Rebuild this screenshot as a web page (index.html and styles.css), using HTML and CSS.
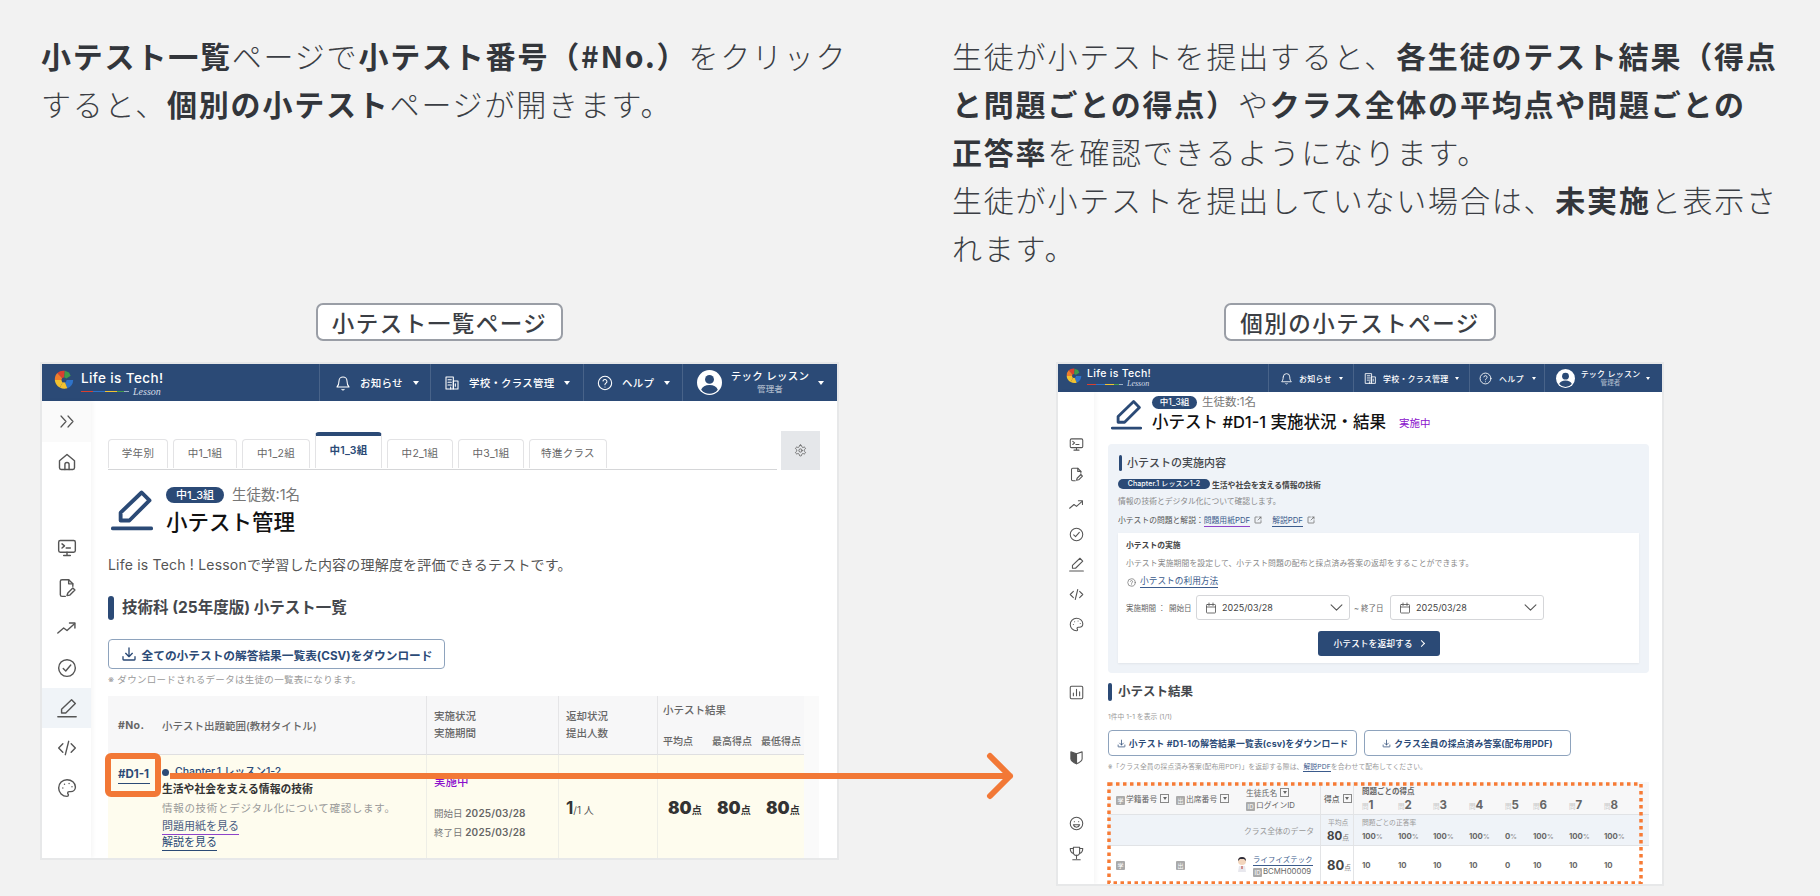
FILE: index.html
```html
<!DOCTYPE html>
<html lang="ja">
<head>
<meta charset="utf-8">
<title>小テスト</title>
<link rel="stylesheet" href="styles.css">
</head>
<body>
<svg class="defs" aria-hidden="true">
  <symbol id="i-bell" viewBox="0 0 24 24"><path d="M6 9a6 6 0 0 1 12 0c0 6 2 8 3 9H3c1-1 3-3 3-9"/><path d="M10.3 21.5a2 2 0 0 0 3.4 0"/></symbol>
  <symbol id="i-building" viewBox="0 0 24 24"><rect x="3" y="3" width="11" height="18"/><rect x="14" y="9" width="7" height="12"/><path d="M6 7h5M6 11h5M6 15h5M17 13v4M10 21v-3"/></symbol>
  <symbol id="i-help" viewBox="0 0 24 24"><circle cx="12" cy="12" r="10"/><path d="M9 9a3 3 0 0 1 5.9 1c0 2-3 2.5-3 4.5"/><path d="M12 18h.01"/></symbol>
  <symbol id="i-pen" viewBox="0 0 24 24"><path d="M1 22.5h22"/><path d="M17.500 2l4.500 4.500L10.500 18H5.500v-4.500z"/></symbol>
  <symbol id="i-home" viewBox="0 0 24 24"><path d="M3 10.500 12 3l9 7.500V19a2 2 0 0 1-2 2H5a2 2 0 0 1-2-2z"/><path d="M9.500 21v-6a2.500 2.500 0 0 1 5 0v6"/></symbol>
  <symbol id="i-monitor" viewBox="0 0 24 24"><rect x="2" y="3" width="20" height="14" rx="2"/><path d="M6 7l3 2.500L6 12M11 12h5M12 17v4M8 21h8"/></symbol>
  <symbol id="i-file" viewBox="0 0 24 24"><path d="M10 22H6a2 2 0 0 1-2-2V4a2 2 0 0 1 2-2h8l5 5v3"/><path d="M14 2v5h5"/><path d="M12 21l1-3 6-6 2.500 2.500-6 6z"/></symbol>
  <symbol id="i-trend" viewBox="0 0 24 24"><path d="M1 18l7-6 4 3 9-8"/><path d="M15 6h6.500v6"/></symbol>
  <symbol id="i-check" viewBox="0 0 24 24"><circle cx="12" cy="12" r="10"/><path d="M7.500 12.500l3 3 6-7"/></symbol>
  <symbol id="i-code" viewBox="0 0 24 24"><path d="M7 7l-5 5 5 5M17 7l5 5-5 5M14 4l-4 16"/></symbol>
  <symbol id="i-palette" viewBox="0 0 24 24"><path d="M12 2C6.500 2 2 6.500 2 12s4.500 10 10 10c.9 0 1.700-.8 1.700-1.700 0-.4-.2-.8-.5-1.100-.3-.3-.4-.7-.4-1.100 0-.9.8-1.700 1.700-1.700h2c3.100 0 5.600-2.500 5.600-5.600C22 6 17.500 2 12 2z"/><path class="dots" d="M7 12h.01M9 7.500h.01M14.500 6.500h.01M18 10.500h.01"/></symbol>
  <symbol id="i-gear" viewBox="0 0 24 24"><path d="M12.220 2h-.44a2 2 0 0 0-2 2v.18a2 2 0 0 1-1 1.730l-.43.25a2 2 0 0 1-2 0l-.15-.08a2 2 0 0 0-2.730.73l-.22.38a2 2 0 0 0 .73 2.730l.15.1a2 2 0 0 1 1 1.720v.51a2 2 0 0 1-1 1.740l-.15.09a2 2 0 0 0-.73 2.730l.22.38a2 2 0 0 0 2.730.73l.15-.08a2 2 0 0 1 2 0l.43.25a2 2 0 0 1 1 1.730V20a2 2 0 0 0 2 2h.44a2 2 0 0 0 2-2v-.18a2 2 0 0 1 1-1.730l.43-.25a2 2 0 0 1 2 0l.15.08a2 2 0 0 0 2.730-.73l.22-.39a2 2 0 0 0-.73-2.730l-.15-.08a2 2 0 0 1-1-1.740v-.5a2 2 0 0 1 1-1.740l.15-.09a2 2 0 0 0 .73-2.730l-.22-.38a2 2 0 0 0-2.730-.73l-.15.08a2 2 0 0 1-2 0l-.43-.25a2 2 0 0 1-1-1.730V4a2 2 0 0 0-2-2z"/><circle cx="12" cy="12" r="3"/></symbol>
  <symbol id="i-download" viewBox="0 0 24 24"><path d="M12 3v13M7 11l5 5 5-5M3 16v4a1 1 0 0 0 1 1h16a1 1 0 0 0 1-1v-4"/></symbol>
  <symbol id="i-calendar" viewBox="0 0 24 24"><rect x="3" y="5" width="18" height="17" rx="1.500"/><path d="M3 10h18M8 2v5M16 2v5"/></symbol>
  <symbol id="i-chev" viewBox="0 0 24 24"><path d="M2 7l10 10L22 7"/></symbol>
  <symbol id="i-ext" viewBox="0 0 24 24"><path d="M10 3H4a1 1 0 0 0-1 1v16a1 1 0 0 0 1 1h16a1 1 0 0 0 1-1v-6"/><path d="M15 3h6v6M21 3l-9 9"/></symbol>
  <symbol id="i-bars" viewBox="0 0 24 24"><rect x="2" y="2" width="20" height="20" rx="2"/><path d="M7 17v-4M12 17V7M17 17v-6"/></symbol>
  <symbol id="i-smile" viewBox="0 0 24 24"><circle cx="12" cy="12" r="10"/><path d="M7 14c1 3 3 4 5 4s4-1 5-4z"/><path d="M8.500 9h.01M15.500 9h.01"/></symbol>
  <symbol id="i-trophy" viewBox="0 0 24 24"><path d="M7 2h10v8a5 5 0 0 1-10 0z"/><path d="M7 4H2c0 5 2 7 5 8M17 4h5c0 5-2 7-5 8M12 15v5M6 22h12"/></symbol>
</svg>

<main class="page">
  <p class="lead">
    <b>小テスト一覧</b>ページで<b>小テスト番号（#No.）</b>をクリック<br>すると、<b>個別の小テスト</b>ページが開きます。
  </p>
  <p class="lead lead-wide">
    生徒が小テストを提出すると、<b>各生徒のテスト結果（得点<br>と問題ごとの得点）</b>や<b>クラス全体の平均点や問題ごとの<br>正答率</b>を確認できるようになります。<br>生徒が小テストを提出していない場合は、<b>未実施</b>と表示さ<br>れます。
  </p>

  <section class="figure">
    <h2 class="tag">小テスト一覧ページ</h2>
    <div class="win win-a">
      <header class="topbar">
        <div class="brand">
          <svg class="logo" viewBox="0 0 24 24"><path fill="#d9402f" d="M12 12 4 3.500A11 11 0 0 1 13 1z"/><path fill="#ef7d2b" d="M12 12 1 12a11 11 0 0 1 3-8.500z"/><path fill="#3f9b4b" d="M12 12l1-11 5 2 2 4z"/><path fill="#2f73c9" d="M12 12h11a11 11 0 0 1-7 10z"/><path fill="#f2c230" d="M12 12l4 10a11 11 0 0 1-9-1z"/><path fill="#f2c230" d="M12 12 7 21a11 11 0 0 1-6-9z"/><circle cx="12" cy="12" r="3" fill="#2b4a76"/></svg>
          <div class="brand-text">
            <span class="brand-name">Life is Tech!</span>
            <span class="brand-sub"><i class="rainbow"></i><em>Lesson</em></span>
          </div>
        </div>
        <div class="nav nav-1"><svg class="ic"><use href="#i-bell"/></svg><span>お知らせ</span><i class="caret"></i></div>
        <div class="nav nav-2"><svg class="ic"><use href="#i-building"/></svg><span>学校・クラス管理</span><i class="caret"></i></div>
        <div class="nav nav-3"><svg class="ic"><use href="#i-help"/></svg><span>ヘルプ</span><i class="caret"></i></div>
        <div class="nav nav-4">
          <svg class="avatar" viewBox="0 0 24 24"><circle cx="12" cy="12" r="12" fill="#fff"/><circle cx="12" cy="9" r="4.300" fill="#2b4a76"/><path fill="#2b4a76" d="M4 19c1-3 4-4.500 8-4.500s7 1.500 8 4.500a10.500 10.500 0 0 1-16 0z"/></svg>
          <div class="who"><span>テック レッスン</span><small>管理者</small></div><i class="caret"></i>
        </div>
      </header>
      <div class="shell">
        <nav class="side">
          <div class="side-toggle"><svg class="ic"><path d="M2 3l5 5.500L2 14M9 3l5 5.500L9 14"/></svg></div>
          <a class="side-item"><svg class="ic"><use href="#i-home"/></svg></a>
          <div class="side-gap"></div>
          <a class="side-item"><svg class="ic"><use href="#i-monitor"/></svg></a>
          <a class="side-item"><svg class="ic"><use href="#i-file"/></svg></a>
          <a class="side-item"><svg class="ic"><use href="#i-trend"/></svg></a>
          <a class="side-item"><svg class="ic"><use href="#i-check"/></svg></a>
          <a class="side-item is-on"><svg class="ic"><use href="#i-pen"/></svg></a>
          <a class="side-item"><svg class="ic"><use href="#i-code"/></svg></a>
          <a class="side-item"><svg class="ic"><use href="#i-palette"/></svg></a>
        </nav>
        <div class="content-a">
          <div class="tabrow">
            <ul class="tabs">
              <li>学年別</li><li>中1_1組</li><li>中1_2組</li><li class="is-on">中1_3組</li><li>中2_1組</li><li>中3_1組</li><li>特進クラス</li>
            </ul>
            <div class="gear"><svg class="ic"><use href="#i-gear"/></svg></div>
          </div>
          <div class="head-a">
            <svg class="pen-big"><use href="#i-pen"/></svg>
            <div>
              <div class="meta"><span class="pill">中1_3組</span><span class="count">生徒数:1名</span></div>
              <h1 class="title-a">小テスト管理</h1>
            </div>
          </div>
          <p class="desc-a">Life is Tech ! Lessonで学習した内容の理解度を評価できるテストです。</p>
          <h3 class="sec sec-a">技術科 (25年度版) 小テスト一覧</h3>
          <a class="btn btn-a"><svg class="ic"><use href="#i-download"/></svg>全ての小テストの解答結果一覧表(CSV)をダウンロード</a>
          <p class="note-a">※ ダウンロードされるデータは生徒の一覧表になります。</p>

          <div class="qt">
            <div class="qh qh-main"><span class="qh-no">#No.</span><span>小テスト出題範囲(教材タイトル)</span></div>
            <div class="qh qh-two"><span>実施状況</span><span>実施期間</span></div>
            <div class="qh qh-two"><span>返却状況</span><span>提出人数</span></div>
            <div class="qh qh-res"><span>小テスト結果</span><div class="qh-sub"><span>平均点</span><span>最高得点</span><span>最低得点</span></div></div>
            <div class="qscroll"></div>
            <div class="qc qc-main">
              <a class="qno">#D1-1</a>
              <div class="qinfo">
                <p class="q-ch"><i class="dot"></i>Chapter.1 レッスン1-2</p>
                <p class="q-title">生活や社会を支える情報の技術</p>
                <p class="q-desc">情報の技術とデジタル化について確認します。</p>
                <a class="q-link q-visited">問題用紙を見る</a>
                <a class="q-link">解説を見る</a>
              </div>
            </div>
            <div class="qc qc-status">
              <p class="live">実施中</p>
              <p class="date">開始日 <b>2025/03/28</b></p>
              <p class="date">終了日 <b>2025/03/28</b></p>
            </div>
            <div class="qc qc-num"><b>1</b><span>/1 人</span></div>
            <div class="qc qc-scores"><p><b>80</b>点</p><p><b>80</b>点</p><p><b>80</b>点</p></div>
            <div class="qscroll"></div>
            <i class="callout"></i>
          </div>
        </div>
      </div>
    </div>
  </section>

  <section class="figure figure-b">
    <h2 class="tag">個別の小テストページ</h2>
    <div class="win win-b">
      <header class="topbar">
        <div class="brand">
          <svg class="logo" viewBox="0 0 24 24"><path fill="#d9402f" d="M12 12 4 3.500A11 11 0 0 1 13 1z"/><path fill="#ef7d2b" d="M12 12 1 12a11 11 0 0 1 3-8.500z"/><path fill="#3f9b4b" d="M12 12l1-11 5 2 2 4z"/><path fill="#2f73c9" d="M12 12h11a11 11 0 0 1-7 10z"/><path fill="#f2c230" d="M12 12l4 10a11 11 0 0 1-9-1z"/><path fill="#f2c230" d="M12 12 7 21a11 11 0 0 1-6-9z"/><circle cx="12" cy="12" r="3" fill="#2b4a76"/></svg>
          <div class="brand-text">
            <span class="brand-name">Life is Tech!</span>
            <span class="brand-sub"><i class="rainbow"></i><em>Lesson</em></span>
          </div>
        </div>
        <div class="nav nav-1"><svg class="ic"><use href="#i-bell"/></svg><span>お知らせ</span><i class="caret"></i></div>
        <div class="nav nav-2"><svg class="ic"><use href="#i-building"/></svg><span>学校・クラス管理</span><i class="caret"></i></div>
        <div class="nav nav-3"><svg class="ic"><use href="#i-help"/></svg><span>ヘルプ</span><i class="caret"></i></div>
        <div class="nav nav-4">
          <svg class="avatar" viewBox="0 0 24 24"><circle cx="12" cy="12" r="12" fill="#fff"/><circle cx="12" cy="9" r="4.300" fill="#2b4a76"/><path fill="#2b4a76" d="M4 19c1-3 4-4.500 8-4.500s7 1.500 8 4.500a10.500 10.500 0 0 1-16 0z"/></svg>
          <div class="who"><span>テック レッスン</span><small>管理者</small></div><i class="caret"></i>
        </div>
      </header>
      <div class="shell">
        <nav class="side">
          <a class="side-item"><svg class="ic"><use href="#i-monitor"/></svg></a>
          <a class="side-item"><svg class="ic"><use href="#i-file"/></svg></a>
          <a class="side-item"><svg class="ic"><use href="#i-trend"/></svg></a>
          <a class="side-item"><svg class="ic"><use href="#i-check"/></svg></a>
          <a class="side-item"><svg class="ic"><use href="#i-pen"/></svg></a>
          <a class="side-item"><svg class="ic"><use href="#i-code"/></svg></a>
          <a class="side-item"><svg class="ic"><use href="#i-palette"/></svg></a>
          <a class="side-item side-bars"><svg class="ic"><use href="#i-bars"/></svg></a>
          <a class="side-item side-shield"><svg class="ic" viewBox="0 0 24 24"><path class="solid" d="M12 6 3 3v11c0 3 4 6 9 8z"/><path d="M12 6l9-3v11c0 3-4 6-9 8z"/></svg></a>
          <a class="side-item side-smile"><svg class="ic"><use href="#i-smile"/></svg></a>
          <a class="side-item"><svg class="ic"><use href="#i-trophy"/></svg></a>
        </nav>
        <div class="content-b">
          <div class="head-b">
            <svg class="pen-big"><use href="#i-pen"/></svg>
            <div>
              <div class="meta"><span class="pill">中1_3組</span><span class="count">生徒数:1名</span></div>
              <div class="title-row"><h1 class="title-b">小テスト #D1-1 実施状況・結果</h1><span class="live-b">実施中</span></div>
            </div>
          </div>

          <section class="panel">
            <h3 class="sec sec-b">小テストの実施内容</h3>
            <p class="chapter"><span class="pill pill-ch">Chapter.1 レッスン1-2</span><b>生活や社会を支える情報の技術</b></p>
            <p class="small gray row-desc">情報の技術とデジタル化について確認します。</p>
            <p class="small row-links">小テストの問題と解説：<a class="lnk lnk-v">問題用紙PDF</a><svg class="ic-ext"><use href="#i-ext"/></svg><a class="lnk">解説PDF</a><svg class="ic-ext"><use href="#i-ext"/></svg></p>
            <div class="card">
              <h4 class="card-title">小テストの実施</h4>
              <p class="small gray card-text">小テスト実施期間を設定して、小テスト問題の配布と採点済み答案の返却をすることができます。</p>
              <p class="card-help"><svg class="ic-help"><use href="#i-help"/></svg><a class="lnk">小テストの利用方法</a></p>
              <div class="dates">
                <span class="small lab lab-1">実施期間 ：</span><span class="small lab lab-2">開始日</span>
                <div class="select"><svg class="ic-cal"><use href="#i-calendar"/></svg><span>2025/03/28</span><svg class="ic-chev"><use href="#i-chev"/></svg></div>
                <span class="small lab lab-3">~ 終了日</span>
                <div class="select"><svg class="ic-cal"><use href="#i-calendar"/></svg><span>2025/03/28</span><svg class="ic-chev"><use href="#i-chev"/></svg></div>
              </div>
              <a class="btn-return">小テストを返却する<i class="gt"></i></a>
            </div>
          </section>

          <h3 class="sec sec-c">小テスト結果</h3>
          <p class="tiny count-line">1件中 1-1 を表示 (1/1)</p>
          <div class="btns">
            <a class="btn btn-b1"><svg class="ic"><use href="#i-download"/></svg>小テスト #D1-1の解答結果一覧表(csv)をダウンロード</a>
            <a class="btn btn-b2"><svg class="ic"><use href="#i-download"/></svg>クラス全員の採点済み答案(配布用PDF)</a>
          </div>
          <p class="tiny note-b">※「クラス全員の採点済み答案(配布用PDF)」を返却する際は、<a class="lnk">解説PDF</a>を合わせて配布してください。</p>

          <div class="rt">
            <div class="rt-row rt-head">
              <div class="rt-id">
                <span class="idc idc-1"><i class="tile">学</i>学籍番号<i class="filter"></i></span>
                <span class="idc idc-2"><i class="tile">出</i>出席番号<i class="filter"></i></span>
                <span class="idc-3"><span>生徒氏名<i class="filter"></i></span><span><i class="tile">ID</i>ログインID</span></span>
              </div>
              <div class="rt-score rt-score-h">得点<i class="filter"></i></div>
              <div class="rt-q rt-q-head">
                <span class="rt-span rt-span-h">問題ごとの得点</span>
                <span class="qn">問<b>1</b></span><span class="qn">問<b>2</b></span><span class="qn">問<b>3</b></span><span class="qn">問<b>4</b></span><span class="qn">問<b>5</b></span><span class="qn">問<b>6</b></span><span class="qn">問<b>7</b></span><span class="qn">問<b>8</b></span>
              </div>
            </div>
            <div class="rt-row rt-avg">
              <div class="rt-id rt-id-avg">クラス全体のデータ</div>
              <div class="rt-score rt-score-a"><small>平均点</small><p><b>80</b>点</p></div>
              <div class="rt-q">
                <span class="rt-span">問題ごとの正答率</span>
                <span class="pc">100<i>%</i></span><span class="pc">100<i>%</i></span><span class="pc">100<i>%</i></span><span class="pc">100<i>%</i></span><span class="pc">0<i>%</i></span><span class="pc">100<i>%</i></span><span class="pc">100<i>%</i></span><span class="pc">100<i>%</i></span>
              </div>
            </div>
            <div class="rt-row rt-data">
              <div class="rt-id">
                <i class="tile tile-l">学</i>
                <i class="tile tile-m">出</i>
                <svg class="kid" viewBox="0 0 10 18"><circle cx="5" cy="5" r="4" fill="#f3d6bd"/><path fill="#2c2c3a" d="M1 5a4 4 0 0 1 8 0L7 3H3z"/><path fill="#e8e8ee" d="M2 10h6l1 6H1z"/><path fill="#c0392b" d="M4.500 10h1v3h-1z"/></svg>
                <span class="stu"><a class="lnk">ライフイズテック</a><span><i class="tile">ID</i>BCMH00009</span></span>
              </div>
              <div class="rt-score rt-score-d"><p><b>80</b>点</p></div>
              <div class="rt-q rt-q-data"><b>10</b><b>10</b><b>10</b><b>10</b><b>0</b><b>10</b><b>10</b><b>10</b></div>
            </div>
            <svg class="dash" viewBox="0 0 536 103"><rect x="2" y="2" width="532" height="99"/></svg>
          </div>
        </div>
      </div>
    </div>
  </section>

  <svg class="arrow" viewBox="0 0 850 50"><path d="M0 24h840M820 4l20 20-20 20"/></svg>
</main>
</body>
</html>
```

FILE: styles.css
```css
* { box-sizing: border-box; }
html, body { margin: 0; padding: 0; }
body {
  width: 1820px; height: 896px; overflow: hidden;
  background: #f2f2f2;
  color: #3b3e44;
  font-family: Inter, "Noto Sans CJK JP", sans-serif;
}
p, h1, h2, h3, h4, ul { margin: 0; padding: 0; font-weight: inherit; font-size: inherit; }
a { color: inherit; text-decoration: none; }
i, em { font-style: normal; }
svg { display: block; flex: none; }
.defs { position: absolute; width: 0; height: 0; }
.ic, .pen-big, .ic-ext, .ic-help, .ic-cal, .ic-chev { fill: none; stroke: currentColor; stroke-width: 2; stroke-linecap: round; stroke-linejoin: round; }
.ic .solid { fill: currentColor; }

.page {
  position: relative;
  display: grid;
  grid-template-columns: 797px 830px;
  grid-template-rows: 272px auto;
  column-gap: 114px;
  padding: 31px 0 0 41px;
}
.lead {
  font-family: "Noto Sans CJK JP", sans-serif;
  font-size: 30px; line-height: 48px; letter-spacing: 1.8px;
  font-weight: 300; color: #3b3e44;
  white-space: nowrap;
}
.lead b { font-weight: 700; color: #33363b; }

.figure { display: flex; flex-direction: column; align-items: center; gap: 23px; }
.figure-b { width: 816px; }
.tag {
  height: 38px; padding: 0 14px; background: #fff;
  border: 2px solid #9a9ea6; border-radius: 7px;
  font-family: "Noto Sans CJK JP", sans-serif;
  font-size: 22.500px; letter-spacing: 1.500px; line-height: 34px; font-weight: 500; color: #3b3e44;
  white-space: nowrap;
}
.win { background: #fff; box-shadow: 0 0 0 2px #e7e8e9; overflow: hidden; flex: none; }
.win-a { width: 795px; height: 494px; }
.win-b { width: 604px; height: 520px; }

/* top bar */
.topbar { display: flex; height: 37px; background: #2b4a76; color: #fff; font-size: 10.500px; font-weight: 500; }
.win-b .topbar { height: 28px; font-size: 8px; }
.brand { display: flex; align-items: flex-start; width: 277px; padding: 6px 0 0 12px; gap: 7px; }
.win-b .brand { width: 210px; padding: 4px 0 0 8px; gap: 5px; }
.logo { width: 20px; height: 20px; }
.win-b .logo { width: 16px; height: 16px; }
.brand-text { display: flex; flex-direction: column; }
.brand-name { font-size: 13.500px; line-height: 16px; font-weight: 500; letter-spacing: .4px; white-space: nowrap; }
.win-b .brand-name { font-size: 10.500px; line-height: 12px; letter-spacing: .3px; }
.brand-sub { display: flex; align-items: center; gap: 4px; height: 11px; }
.win-b .brand-sub { height: 8px; }
.rainbow { display: block; width: 48px; height: 1px; background: linear-gradient(90deg,#d9402f 0 25%,#2f73c9 25% 50%,#f2c230 50% 75%,#3f9b4b 75% 90%,#9fb0c6 90%); }
.win-b .rainbow { width: 36px; }
.brand-sub em { font-family: "Liberation Serif", serif; font-style: italic; font-size: 10px; color: #d5dde8; line-height: 10px; }
.win-b .brand-sub em { font-size: 8px; }

.nav { display: flex; align-items: center; border-left: 1px solid rgba(255,255,255,.14); white-space: nowrap; letter-spacing: .2px; }
.nav .ic { width: 16px; height: 16px; stroke-width: 1.600; }
.win-b .nav .ic { width: 13px; height: 13px; }
.caret { display: block; width: 0; height: 0; border: 3px solid transparent; border-top: 4px solid #fff; border-bottom: 0; margin-left: 0; }
.nav-1 .caret, .nav-2 .caret, .nav-3 .caret { margin-left: 1px; }
.win-b .caret { border-width: 2.500px; border-top-width: 3px; border-bottom-width: 0; }
.nav-1 { width: 111px; padding-left: 15px; gap: 9px; }
.nav-2 { width: 153px; padding-left: 13px; gap: 9px; }
.nav-3 { width: 99px; padding-left: 13px; gap: 9px; }
.nav-4 { flex: 1; padding-left: 14px; gap: 9px; }
.win-b .nav-1 { width: 85px; padding-left: 11px; gap: 6px; }
.win-b .nav-2 { width: 116px; padding-left: 10px; gap: 6px; }
.win-b .nav-3 { width: 75px; padding-left: 9px; gap: 7px; }
.win-b .nav-4 { padding-left: 11px; gap: 6px; }
.avatar { width: 25px; height: 25px; }
.win-b .avatar { width: 19px; height: 19px; }
.who { display: flex; flex-direction: column; align-items: center; width: 78px; line-height: 13px; }
.who span { font-size: 10.500px; letter-spacing: .3px; }
.who small { font-size: 8.500px; color: #a9b6c8; }
.win-b .who { width: 59px; line-height: 10px; }
.win-b .who span { font-size: 8px; letter-spacing: .2px; }
.win-b .who small { font-size: 6.500px; line-height: 8px; }

/* side bar */
.shell { display: flex; height: calc(100% - 37px); }
.win-b .shell { height: 492px; }
.side { display: flex; flex-direction: column; width: 49px; color: #555; box-shadow: 2px 0 4px rgba(0,0,0,.04); flex: none; }
.win-b .side { width: 36px; padding-top: 37px; }
.side-toggle { height: 41px; display: flex; align-items: center; justify-content: center; background: #fafafa; }
.side-toggle .ic { width: 16px; height: 17px; stroke-width: 1.200; }
.side-item { display: flex; align-items: center; justify-content: center; height: 40px; }
.side-item .ic { width: 20px; height: 20px; stroke-width: 1.700; }
.side-gap { height: 46px; }
.side-item.is-on { background: #f0f4f8; }
.win-b .side-item { height: 30px; }
.win-b .side-item .ic { width: 15px; height: 15px; }
.side-bars { margin-top: 38px; }
.side-shield { margin-top: 35px; }
.side-smile { margin-top: 36px; }

/* list page */
.content-a { flex: 1; padding: 30px 0 0 17px; min-width: 0; }
.tabrow { display: flex; align-items: flex-end; height: 39px; }
.tabs {
  display: grid; grid-template-columns: 60px 64px 68px 67px 66px 66px 78px; column-gap: 5px;
  align-items: end; list-style: none; width: 669px; height: 39px; padding-bottom: 1px;
  border-bottom: 1px solid #d5d6d8; font-size: 10.500px; color: #666;
}
.tabs li { height: 29px; line-height: 28px; text-align: center; border: 1px solid #e3e3e5; border-bottom: 0; border-radius: 4px 4px 0 0; letter-spacing: .3px; }
.tabs li.is-on { height: 36px; line-height: 26px; padding-top: 2px; border-top: 4px solid #2b4a76; color: #2b4a76; font-weight: 600; }
.gear { width: 39px; height: 39px; margin-left: 4px; background: #e5e7ea; color: #666; display: flex; align-items: center; justify-content: center; }
.gear .ic { width: 13px; height: 13px; stroke-width: 1.700; }
.head-a { display: flex; align-items: flex-start; margin-top: 17px; padding-left: 3px; gap: 13px; }
.pen-big { width: 42px; height: 42px; color: #2b4a76; stroke-width: 2.200; margin-top: 2px; }
.meta { display: flex; align-items: center; gap: 8px; }
.pill { display: inline-block; background: #2b4a76; color: #fff; border-radius: 9px; height: 16px; line-height: 16px; width: 58px; text-align: center; font-size: 11px; font-weight: 500; }
.count { font-size: 14.500px; color: #777; line-height: 16px; }
.title-a { font-size: 21.500px; line-height: 28px; font-weight: 500; color: #111; margin-top: 5px; }
.desc-a { margin-top: 19px; font-size: 14px; line-height: 20px; color: #555; letter-spacing: .2px; white-space: nowrap; }
.sec { position: relative; font-weight: 700; color: #44474c; white-space: nowrap; }
.sec::before { content: ""; position: absolute; left: 0; border-radius: 3px; background: #2b4a76; }
.sec-a { margin-top: 21px; padding-left: 14px; height: 24px; font-size: 15.500px; line-height: 24px; }
.sec-a::before { top: 0; width: 6px; height: 24px; }
.btn { display: flex; align-items: center; justify-content: center; background: #fff; border: 1px solid #8ea3bd; border-radius: 4px; color: #2b4a76; font-weight: 700; white-space: nowrap; }
.btn-a { margin-top: 19px; width: 337px; height: 30px; font-size: 11.700px; gap: 5px; }
.btn-a .ic { width: 16px; height: 16px; stroke-width: 2; }
.note-a { margin-top: 5px; height: 12px; line-height: 12px; font-size: 9.500px; color: #9a9a9a; letter-spacing: .3px; }

.qt {
  position: relative; display: grid; margin-top: 10px; width: 711px;
  grid-template-columns: 319px 132px 99px 146px 15px;
  grid-template-rows: 59px 120px;
  border-radius: 3px 3px 0 0;
}
.qh { background: #f7f7f8; border-right: 1px solid #e5e5e7; border-bottom: 1px solid #dfdfe1; font-size: 10.500px; color: #666; font-weight: 500; }
.qh-main { display: flex; align-items: center; padding-left: 10px; }
.qh-no { width: 44px; font-weight: 700; letter-spacing: .4px; }
.qh-two { display: flex; flex-direction: column; justify-content: center; gap: 1px; padding-left: 7px; line-height: 16px; }
.qh-res { padding: 8px 0 0 5px; border-right: 0; line-height: 14px; }
.qh-sub { display: flex; margin-top: 16px; font-size: 10px; }
.qh-sub span { width: 49px; flex: none; }
.qscroll { background: #fafafa; }
.qc { background: #fefcee; border-right: 1px solid #eeeee6; }
.qc-main { display: flex; padding-left: 10px; }
.qno { flex: none; width: 32px; height: 18px; margin: 11px 12px 0 0; line-height: 16px; font-size: 11.500px; font-weight: 700; color: #2b4a76; border-bottom: 1px solid #2b4a76; }
.qinfo { padding-top: 10px; white-space: nowrap; }
.q-ch { display: flex; align-items: center; font-size: 10.500px; line-height: 14px; color: #2b4a76; font-weight: 500; }
.dot { display: block; width: 7px; height: 7px; border-radius: 50%; background: #2b4a76; margin: 0 6px 0 0; }
.q-title { margin-top: 2px; font-size: 10.800px; line-height: 18px; font-weight: 700; color: #333; }
.q-desc { margin-top: 1px; font-size: 10.500px; line-height: 18px; color: #999; letter-spacing: .7px; }
.q-link { display: table; font-size: 11px; line-height: 15px; color: #2b4a76; border-bottom: 1px solid #2b4a76; margin-top: 0; }
.q-visited { border-bottom-color: #8e44c9; color: #4a5d82; margin-top: 1px; }
.qc-status { padding: 18px 0 0 7px; }
.live { font-size: 11.500px; color: #8a10cc; line-height: 18px; font-weight: 500; }
.date { font-size: 9.500px; line-height: 19px; color: #777; }
.date:nth-child(2) { margin-top: 13px; }
.date b { font-weight: 600; color: #666; letter-spacing: .2px; font-size: 10px; }
.qc-num { display: flex; align-items: baseline; padding: 41px 0 0 7px; font-size: 10px; color: #555; }
.qc-num b { font-size: 17px; line-height: 24px; color: #333; }
.qc-scores { display: flex; border-right: 0; padding: 41px 0 0 10px; }
.qc-scores p { flex: none; width: 49px; font-size: 10px; line-height: 24px; font-weight: 700; color: #333; }
.qc-scores b { font-size: 17px; }
.callout { position: absolute; left: -3px; top: 57px; width: 56px; height: 44px; border: 6px solid #f27836; border-radius: 6px; }

/* detail page */
.content-b { flex: 1; padding: 4px 0 0 14px; min-width: 0; width: 568px; }
.head-b { display: flex; align-items: flex-start; height: 48px; padding-left: 3px; gap: 10px; }
.head-b .pen-big { width: 31px; height: 31px; margin-top: 3px; }
.head-b .meta { gap: 5px; height: 13px; }
.head-b .pill { width: 45px; height: 13px; line-height: 13px; font-size: 8.500px; }
.head-b .count { font-size: 11.500px; line-height: 13px; }
.title-row { display: flex; align-items: center; gap: 13px; margin-top: 2px; }
.title-b { font-size: 16.500px; line-height: 22px; font-weight: 500; color: #111; white-space: nowrap; }
.live-b { font-size: 10.500px; color: #8a10cc; }
.panel { width: 541px; height: 229px; background: #eff3f8; border-radius: 4px; padding: 11px 10px 0; }
.sec-b { height: 16px; line-height: 16px; padding-left: 8px; margin-left: 1px; font-size: 11px; font-weight: 500; }
.sec-b::before { top: 0; width: 2.500px; height: 16px; }
.chapter { display: flex; align-items: center; margin-top: 8px; height: 10px; font-size: 7.800px; gap: 2px; color: #444; white-space: nowrap; }
.pill-ch { width: 92px; height: 10px; line-height: 10px; font-size: 7px; letter-spacing: .1px; }
.chapter b { font-weight: 700; }
.small { font-size: 7.800px; color: #555; white-space: nowrap; }
.gray { color: #888; }
.row-desc { margin-top: 6px; height: 12px; line-height: 12px; }
.row-links { display: flex; align-items: center; margin-top: 7px; height: 12px; line-height: 12px; }
.lnk { color: #3b5b8c; border-bottom: 1px solid #3b5b8c; }
.lnk-v { border-bottom-color: #8e44c9; }
.ic-ext { width: 8px; height: 8px; margin: 0 10px 0 4px; color: #666; stroke-width: 2.200; }
.card { width: 521px; height: 130px; margin-top: 7px; background: #fff; padding: 6px 8px 0; box-shadow: 0 1px 2px rgba(0,0,0,.06); }
.card-title { height: 12px; line-height: 12px; font-size: 7.800px; font-weight: 700; color: #444; }
.card-text { margin-top: 6px; height: 12px; line-height: 12px; letter-spacing: .13px; }
.card-help { display: flex; align-items: center; margin-top: 7px; height: 12px; gap: 4px; font-size: 8.700px; padding-left: 1px; }
.card-help .lnk { line-height: 11px; }
.ic-help { width: 9px; height: 9px; color: #777; stroke-width: 2; }
.dates { display: flex; align-items: center; margin-top: 7px; height: 25px; }
.lab-1 { width: 43px; }
.lab-2 { width: 27px; }
.lab-3 { width: 40px; padding-left: 4px; }
.lab { font-size: 7.500px; color: #666; }
.select { display: flex; align-items: center; width: 154px; height: 25px; border: 1px solid #d5d6d9; border-radius: 3px; padding: 0 6px 0 8px; font-size: 9px; color: #444; gap: 5px; }
.ic-cal { width: 12px; height: 12px; color: #555; stroke-width: 1.700; }
.ic-chev { width: 13px; height: 13px; margin-left: auto; color: #555; stroke-width: 2; }
.btn-return { display: flex; align-items: center; justify-content: center; gap: 6px; width: 122px; height: 25px; margin: 11px auto 0; background: #2b4a76; color: #fff; border-radius: 3px; font-size: 8.800px; font-weight: 500; }
.gt { display: block; width: 5px; height: 5px; border-top: 1px solid #fff; border-right: 1px solid #fff; transform: rotate(45deg); }
.sec-c { margin-top: 10px; height: 18px; line-height: 18px; padding-left: 10px; font-size: 12.500px; font-weight: 700; }
.sec-c::before { top: 0; width: 4px; height: 18px; }
.tiny { font-size: 6.800px; color: #999; white-space: nowrap; }
.count-line { margin-top: 10px; height: 12px; line-height: 12px; }
.btns { display: flex; gap: 7px; margin-top: 7px; }
.btn-b1 { width: 249px; height: 26px; font-size: 8.800px; gap: 3px; letter-spacing: .15px; }
.btn-b2 { width: 207px; height: 26px; font-size: 8.800px; gap: 3px; letter-spacing: .15px; }
.btns .ic { width: 9px; height: 9px; }
.note-b { margin-top: 5px; height: 12px; line-height: 12px; letter-spacing: .1px; }
.note-b .lnk { color: #3b5b8c; }

.rt { position: relative; margin-top: 9px; width: 541px; height: 102px; font-size: 7.800px; color: #666; border-radius: 3px; }
.rt-row { display: grid; grid-template-columns: 213px 33px 295px; }
.rt-head { height: 33px; background: #f7f7f8; border-bottom: 1px solid #e1e3e6; }
.rt-avg { height: 31px; background: #eff3f8; border-bottom: 1px solid #e1e3e6; }
.rt-data { height: 38px; background: #fff; }
.rt-id { position: relative; display: flex; align-items: center; border-right: 1px solid #e3e4e6; padding-left: 8px; white-space: nowrap; }
.rt-score { border-right: 1px solid #e3e4e6; }
.rt-q { display: grid; grid-template-columns: 36px 35px 36px 36px 28px 36px 35px 36px 9px; grid-auto-rows: auto; padding-left: 8px; align-content: center; white-space: nowrap; }
.rt-q-head { align-content: end; padding-top: 4px; }
.rt-span { grid-column: 1 / -1; line-height: 12px; font-size: 6.800px; color: #999; }
.rt-span-h { font-size: 7.500px; color: #666; font-weight: 700; line-height: 12px; }
.tile { display: inline-block; width: 9px; height: 9px; line-height: 9px; background: #aaa; color: #fff; text-align: center; font-size: 6px; font-style: normal; border-radius: 1px; margin-right: 1px; vertical-align: -1px; }
.filter { position: relative; display: inline-block; width: 9px; height: 9px; border: 1px solid #888; margin-left: 3px; vertical-align: -1px; }
.filter::after { content: ""; position: absolute; left: 1.500px; top: 2px; border: 2px solid transparent; border-top: 3px solid #666; border-bottom: 0; }
.idc { display: block; flex: none; }
.idc-1 { width: 60px; }
.idc-2 { width: 71px; }
.idc-3 { display: flex; flex-direction: column; line-height: 12px; margin-left: -1px; }
.qn { font-size: 6.500px; color: #aaa; line-height: 15px; font-weight: 300; }
.qn b { font-size: 11.500px; font-weight: 700; color: #666; }
.rt-score-h { display: flex; align-items: center; padding-left: 3px; font-weight: 500; }
.rt-score-a { padding: 2px 0 0 6px; }
.rt-score-a small { display: block; font-size: 6.800px; line-height: 12px; color: #999; padding-left: 1px; }
.rt-score-a p { font-size: 6.800px; line-height: 14px; color: #777; }
.rt-score-a b { font-size: 11.500px; color: #444; }
.rt-id-avg { justify-content: flex-end; padding-right: 6px; color: #999; font-size: 7.800px; }
.pc { font-size: 7.800px; font-weight: 700; color: #666; line-height: 14px; }
.pc i { font-size: 6.500px; color: #999; }
.rt-score-d { display: flex; align-items: center; padding-left: 6px; font-size: 6.800px; color: #777; }
.rt-score-d b { font-size: 13px; color: #444; }
.rt-q-data { align-content: center; align-items: center; height: 100%; font-size: 7.800px; color: #666; }
.rt-q-data b { font-weight: 700; }
.tile-l { margin: 0; }
.tile-m { margin-left: 51px; }
.kid { width: 10px; height: 18px; margin-left: 51px; }
.stu { display: flex; flex-direction: column; align-items: flex-start; margin-left: 6px; line-height: 11px; font-size: 7.800px; }
.stu .lnk { width: 60px; font-size: 7.300px; letter-spacing: .2px; }
.stu .tile { height: 9px; }
.dash { position: absolute; left: -1px; top: 0; width: 536px; height: 103px; fill: none; stroke: #f77b35; stroke-width: 3.500px; stroke-dasharray: 3.500 3.500; overflow: visible; }

.arrow { position: absolute; left: 170px; top: 752px; width: 850px; height: 50px; fill: none; stroke: #f27836; stroke-width: 6px; stroke-linecap: round; stroke-linejoin: round; pointer-events: none; }
```
